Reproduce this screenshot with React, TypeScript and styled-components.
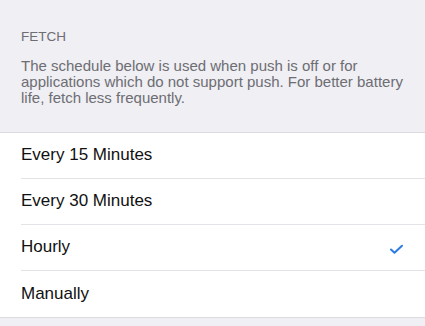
import React from "react";
import styled, { createGlobalStyle } from "styled-components";

const GlobalStyle = createGlobalStyle`
  html, body {
    margin: 0;
    padding: 0;
    background: #efeff4;
  }
  body {
    font-family: "Liberation Sans", Arial, sans-serif;
    -webkit-font-smoothing: antialiased;
  }
`;

const options = [
  { key: "15", label: "Every 15 Minutes" },
  { key: "30", label: "Every 30 Minutes" },
  { key: "hourly", label: "Hourly" },
  { key: "manual", label: "Manually" },
];

function Check(): React.ReactElement {
  return (
    <svg width="15" height="11" viewBox="0 0 15 11" fill="none">
      <path
        d="M2 5.5 L5.5 8.8 L13 1.8"
        stroke="#2c7be5"
        strokeWidth="2"
        strokeLinecap="round"
        strokeLinejoin="round"
      />
    </svg>
  );
}

export default function App(): React.ReactElement {
  const selected = "hourly";
  return (
    <Page>
      <GlobalStyle />
      <Header>
        <SectionTitle>FETCH</SectionTitle>
        <Description>
          The schedule below is used when push is off or for applications which
          do not support push. For better battery life, fetch less frequently.
        </Description>
      </Header>
      <List>
        {options.map(({ key, label }, i) => (
          <Row key={key}>
            <RowInner $last={i === options.length - 1}>
              <Label>{label}</Label>
              {key === selected && <Check />}
            </RowInner>
          </Row>
        ))}
      </List>
      <Footer />
    </Page>
  );
}

const Page = styled.div`
  width: 425px;
  min-height: 326px;
  background: #efeff4;
`;

const Header = styled.div`
  padding: 29px 21px 25px 21px;
  display: flex;
  flex-direction: column;
  gap: 13px;
`;

const SectionTitle = styled.div`
  font-size: 13.5px;
  line-height: 16px;
  color: #6d6d72;
`;

const Description = styled.div`
  font-size: 15px;
  line-height: 16.2px;
  color: #6d6d72;
`;

const List = styled.div`
  background: #ffffff;
  border-top: 1px solid #dcdce0;
  border-bottom: 1px solid #dcdce0;
`;

const Row = styled.div`
  padding-left: 21px;
`;

const RowInner = styled.div<{ $last: boolean }>`
  height: 46px;
  box-sizing: border-box;
  display: flex;
  align-items: center;
  justify-content: space-between;
  padding-right: 21px;
  border-bottom: ${(p) => (p.$last ? "none" : "1px solid #e4e4e8")};
  svg {
    margin-top: 4px;
  }
`;

const Label = styled.div`
  font-size: 17px;
  color: #111111;
`;

const Footer = styled.div`
  height: 9px;
`;
